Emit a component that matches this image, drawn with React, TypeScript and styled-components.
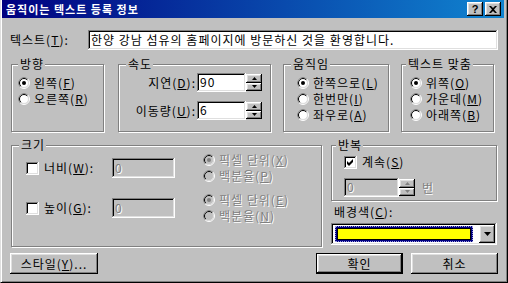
import React from 'react';
import styled, { createGlobalStyle, css } from 'styled-components';

const GlobalStyle = createGlobalStyle`
  html, body {
    margin: 0;
    padding: 0;
    background: #c0c0c0;
  }
  body {
    font-family: "Noto Sans CJK KR", "Liberation Sans", sans-serif;
    font-size: 12px;
    letter-spacing: 1px;
    color: #000;
  }
`;

const raised = css`
  box-shadow: inset -1px -1px #000, inset 1px 1px #fff, inset -2px -2px #808080, inset 2px 2px #dfdfdf;
`;

const sunken = css`
  box-shadow: inset -1px -1px #fff, inset 1px 1px #808080, inset -2px -2px #dfdfdf, inset 2px 2px #000;
`;

const Window = styled.div`
  box-sizing: border-box;
  width: 508px;
  height: 283px;
  background: #c0c0c0;
  border-left: 1px solid #dfdfdf;
  border-right: 1px solid #000;
  border-bottom: 1px solid #000;
  box-shadow: inset 1px 0 #fff, inset -1px -1px #808080;
  padding: 0 3px 3px 1px;
  display: flex;
  flex-direction: column;
`;

const TitleBar = styled.div`
  flex: none;
  height: 18px;
  display: flex;
  align-items: center;
  gap: 2px;
  padding: 0 3px 0 4px;
  background: linear-gradient(to right, #000080, #1084d0);
`;

const Title = styled.span`
  flex: 1;
  color: #fff;
  font-weight: bold;
  font-size: 11px;
  line-height: 14px;
  white-space: nowrap;
`;

const TitleButton = styled.span`
  box-sizing: border-box;
  width: 16px;
  height: 14px;
  display: flex;
  align-items: center;
  justify-content: center;
  background: #c0c0c0;
  font-family: "Liberation Sans", sans-serif;
  font-weight: bold;
  font-size: 11px;
  line-height: 12px;
  letter-spacing: 0;
  ${raised};
`;

const Client = styled.div`
  display: flex;
  flex-direction: column;
  padding: 12px 6px 0 8px;
`;

const TextRow = styled.div`
  display: flex;
  align-items: center;
  height: 20px;
`;

const Text = styled.span<{ $disabled?: boolean }>`
  white-space: nowrap;
  line-height: 16px;
  color: ${p => (p.$disabled ? '#808080' : '#000')};
  text-shadow: ${p => (p.$disabled ? '1px 1px 0 #fff' : 'none')};
`;

const RowLabel = styled(Text)`
  width: 78px;
  flex: none;
`;

const TextBox = styled.div`
  box-sizing: border-box;
  width: 411px;
  height: 20px;
  padding: 2px 3px;
  background: #fff;
  line-height: 16px;
  white-space: nowrap;
  overflow: hidden;
  ${sunken};
`;

const GroupRow = styled.div`
  display: flex;
  margin-top: 14px;
  padding-left: 1px;
`;

const Group = styled.div<{ $w: number; $h: number; $pad: string; $ml?: number }>`
  position: relative;
  box-sizing: border-box;
  flex: none;
  width: ${p => p.$w}px;
  height: ${p => p.$h}px;
  margin-left: ${p => p.$ml ?? 0}px;
  padding: ${p => p.$pad};
  border: 1px solid #808080;
  box-shadow: inset 1px 1px #fff, 1px 1px #fff;
  display: flex;
  flex-direction: column;
`;

const Legend = styled.span<{ $x?: number }>`
  position: absolute;
  top: -9px;
  left: ${p => p.$x ?? 6}px;
  padding: 0 1px 0 2px;
  background: #c0c0c0;
  line-height: 16px;
  white-space: nowrap;
`;

const Option = styled.div`
  display: flex;
  align-items: center;
  gap: 4px;
  height: 16px;
`;

const SpeedGrid = styled.div`
  display: grid;
  grid-template-columns: 67px 65px;
  column-gap: 1px;
  row-gap: 9px;
  align-items: center;
`;

const RightText = styled(Text)`
  text-align: right;
`;

const SpinBox = styled.div<{ $w: number }>`
  display: flex;
  width: ${p => p.$w}px;
  height: 19px;
`;

const SpinField = styled.div<{ $disabled?: boolean }>`
  box-sizing: border-box;
  flex: 1;
  padding: 1px 3px;
  background: ${p => (p.$disabled ? '#c0c0c0' : '#fff')};
  line-height: 16px;
  ${sunken};
`;

const SpinButtons = styled.div`
  width: 16px;
  display: flex;
  flex-direction: column;
  padding: 1px 0;
  box-sizing: border-box;
`;

const SpinButton = styled.span`
  flex: 1;
  display: flex;
  align-items: center;
  justify-content: center;
  background: #c0c0c0;
  ${raised};
`;

const MiddleRow = styled.div`
  display: flex;
  margin-top: 13px;
  padding-left: 1px;
`;

const SizeRow = styled.div<{ $mt?: number }>`
  display: flex;
  align-items: center;
  height: 32px;
  margin-top: ${p => p.$mt ?? 0}px;
`;

const CheckLine = styled.div<{ $w?: number }>`
  display: flex;
  align-items: center;
  gap: 5px;
  width: ${p => (p.$w ? `${p.$w}px` : 'auto')};
  flex: none;
`;

const DisabledBox = styled.div`
  box-sizing: border-box;
  width: 63px;
  height: 20px;
  padding: 2px 3px;
  background: #c0c0c0;
  line-height: 16px;
  ${sunken};
`;

const UnitColumn = styled.div`
  display: flex;
  flex-direction: column;
  margin-left: 28px;
`;

const RightColumn = styled.div`
  display: flex;
  flex-direction: column;
  width: 166px;
  margin-left: 9px;
`;

const RepeatRow = styled.div`
  display: flex;
  align-items: center;
  gap: 7px;
  margin-top: 8px;
`;

const ColorLabel = styled(Text)`
  margin: 3px 0 0 3px;
`;

const Combo = styled.div`
  box-sizing: border-box;
  display: flex;
  height: 22px;
  margin-top: 3px;
  padding: 2px;
  background: #fff;
  ${sunken};
`;

const ComboValue = styled.div`
  flex: 1;
  display: flex;
  padding: 1px 6px 1px 2px;
`;

const Selection = styled.div`
  flex: 1;
  display: flex;
  padding: 1px;
  background: #000080;
  border: 1px dotted #a0a0e0;
`;

const Swatch = styled.div`
  flex: 1;
  background: #ffff00;
  border: 1px solid #000;
`;

const DropButton = styled.span`
  width: 16px;
  display: flex;
  align-items: center;
  justify-content: center;
  background: #c0c0c0;
  ${raised};
`;

const ButtonRow = styled.div`
  display: flex;
  margin-top: 6px;
  gap: 8px;
`;

const Button = styled.span<{ $w: number; $default?: boolean; $push?: boolean }>`
  box-sizing: border-box;
  width: ${p => p.$w}px;
  height: 21px;
  display: flex;
  align-items: center;
  justify-content: center;
  margin-left: ${p => (p.$push ? 'auto' : '0')};
  background: #c0c0c0;
  line-height: 16px;
  ${p =>
    p.$default
      ? css`
          border: 1px solid #000;
          ${raised};
        `
      : raised};
`;

const CheckBox = styled.span<{ $disabled?: boolean }>`
  box-sizing: border-box;
  flex: none;
  width: 13px;
  height: 13px;
  display: flex;
  background: ${p => (p.$disabled ? '#c0c0c0' : '#fff')};
  ${sunken};
`;

function RadioMark({ checked, disabled }: { checked?: boolean; disabled?: boolean }) {
  return (
    <svg width="12" height="12" viewBox="0 0 12 12" style={{ flex: 'none' }}>
      <circle cx="6" cy="6" r="5.5" fill="none" stroke="#fff" />
      <path d="M2.1 9.9A5.5 5.5 0 0 1 9.9 2.1" fill="none" stroke="#808080" />
      <circle cx="6" cy="6" r="4.5" fill={disabled ? '#c0c0c0' : '#fff'} stroke="#dfdfdf" />
      <path d="M2.8 9.2A4.5 4.5 0 0 1 9.2 2.8" fill="none" stroke="#000" />
      {checked && <circle cx="6" cy="6" r="2" fill={disabled ? '#808080' : '#000'} />}
    </svg>
  );
}

function Radio({ checked, disabled, children }: { checked?: boolean; disabled?: boolean; children: React.ReactNode }) {
  return (
    <Option>
      <RadioMark checked={checked} disabled={disabled} />
      <Text $disabled={disabled}>{children}</Text>
    </Option>
  );
}

function Check({ checked }: { checked?: boolean }) {
  return (
    <CheckBox>
      {checked && (
        <svg width="13" height="13" viewBox="0 0 13 13">
          <path d="M3 5L5 7L9 3V6L5 10L3 8Z" fill="#000" />
        </svg>
      )}
    </CheckBox>
  );
}

function Arrow({ up, color = '#000' }: { up?: boolean; color?: string }) {
  return (
    <svg width="5" height="3" viewBox="0 0 5 3">
      <path d={up ? 'M2.5 0L5 3H0Z' : 'M0 0H5L2.5 3Z'} fill={color} />
    </svg>
  );
}

function Spinner({ value, width, disabled }: { value: string; width: number; disabled?: boolean }) {
  const c = disabled ? '#808080' : '#000';
  return (
    <SpinBox $w={width}>
      <SpinField $disabled={disabled}>
        <Text $disabled={disabled}>{value}</Text>
      </SpinField>
      <SpinButtons>
        <SpinButton>
          <Arrow up color={c} />
        </SpinButton>
        <SpinButton>
          <Arrow color={c} />
        </SpinButton>
      </SpinButtons>
    </SpinBox>
  );
}

export default function App() {
  return (
    <>
      <GlobalStyle />
      <Window>
        <TitleBar>
          <Title>움직이는 텍스트 등록 정보</Title>
          <TitleButton>?</TitleButton>
          <TitleButton>
            <svg width="8" height="7" viewBox="0 0 8 7">
              <path d="M0 0H2L4 2L6 0H8L5 3.5L8 7H6L4 5L2 7H0L3 3.5Z" fill="#000" />
            </svg>
          </TitleButton>
        </TitleBar>
        <Client>
          <TextRow>
            <RowLabel>
              텍스트(<u>T</u>):
            </RowLabel>
            <TextBox>한양 강남 섬유의 홈페이지에 방문하신 것을 환영합니다.</TextBox>
          </TextRow>

          <GroupRow>
            <Group $w={93} $h={68} $pad="10px 0 0 6px">
              <Legend>방향</Legend>
              <Radio checked>
                왼쪽(<u>F</u>)
              </Radio>
              <Radio>
                오른쪽(<u>R</u>)
              </Radio>
            </Group>
            <Group $w={153} $h={68} $pad="8px 0 0 10px" $ml={14}>
              <Legend $x={7}>속도</Legend>
              <SpeedGrid>
                <RightText>
                  지연(<u>D</u>):
                </RightText>
                <Spinner value="90" width={65} />
                <RightText>
                  이동량(<u>U</u>):
                </RightText>
                <Spinner value="6" width={65} />
              </SpeedGrid>
            </Group>
            <Group $w={106} $h={68} $pad="10px 0 0 13px" $ml={12}>
              <Legend $x={7}>움직임</Legend>
              <Radio checked>
                한쪽으로(<u>L</u>)
              </Radio>
              <Radio>
                한번만(<u>I</u>)
              </Radio>
              <Radio>
                좌우로(<u>A</u>)
              </Radio>
            </Group>
            <Group $w={93} $h={68} $pad="10px 0 0 8px" $ml={12}>
              <Legend $x={4}>텍스트 맞춤</Legend>
              <Radio checked>
                위쪽(<u>O</u>)
              </Radio>
              <Radio>
                가운데(<u>M</u>)
              </Radio>
              <Radio>
                아래쪽(<u>B</u>)
              </Radio>
            </Group>
          </GroupRow>

          <MiddleRow>
            <Group $w={311} $h={102} $pad="6px 0 0 14px">
              <Legend $x={7}>크기</Legend>
              <SizeRow>
                <CheckLine $w={86}>
                  <Check />
                  <Text>
                    너비(<u>W</u>):
                  </Text>
                </CheckLine>
                <DisabledBox>
                  <Text $disabled>0</Text>
                </DisabledBox>
                <UnitColumn>
                  <Radio checked disabled>
                    픽셀 단위(<u>X</u>)
                  </Radio>
                  <Radio disabled>
                    백분율(<u>P</u>)
                  </Radio>
                </UnitColumn>
              </SizeRow>
              <SizeRow $mt={8}>
                <CheckLine $w={86}>
                  <Check />
                  <Text>
                    높이(<u>G</u>):
                  </Text>
                </CheckLine>
                <DisabledBox>
                  <Text $disabled>0</Text>
                </DisabledBox>
                <UnitColumn>
                  <Radio checked disabled>
                    픽셀 단위(<u>E</u>)
                  </Radio>
                  <Radio disabled>
                    백분율(<u>N</u>)
                  </Radio>
                </UnitColumn>
              </SizeRow>
            </Group>

            <RightColumn>
              <Group $w={166} $h={56} $pad="8px 0 0 12px">
                <Legend $x={4}>반복</Legend>
                <CheckLine>
                  <Check checked />
                  <Text>
                    계속(<u>S</u>)
                  </Text>
                </CheckLine>
                <RepeatRow>
                  <Spinner value="0" width={71} disabled />
                  <Text $disabled>번</Text>
                </RepeatRow>
              </Group>
              <ColorLabel>
                배경색(<u>C</u>):
              </ColorLabel>
              <Combo>
                <ComboValue>
                  <Selection>
                    <Swatch />
                  </Selection>
                </ComboValue>
                <DropButton>
                  <svg width="7" height="4" viewBox="0 0 7 4">
                    <path d="M0 0H7L3.5 4Z" fill="#000" />
                  </svg>
                </DropButton>
              </Combo>
            </RightColumn>
          </MiddleRow>

          <ButtonRow>
            <Button $w={88}>
              스타일(<u>Y</u>)...
            </Button>
            <Button $w={87} $default $push>
              확인
            </Button>
            <Button $w={87}>취소</Button>
          </ButtonRow>
        </Client>
      </Window>
    </>
  );
}
